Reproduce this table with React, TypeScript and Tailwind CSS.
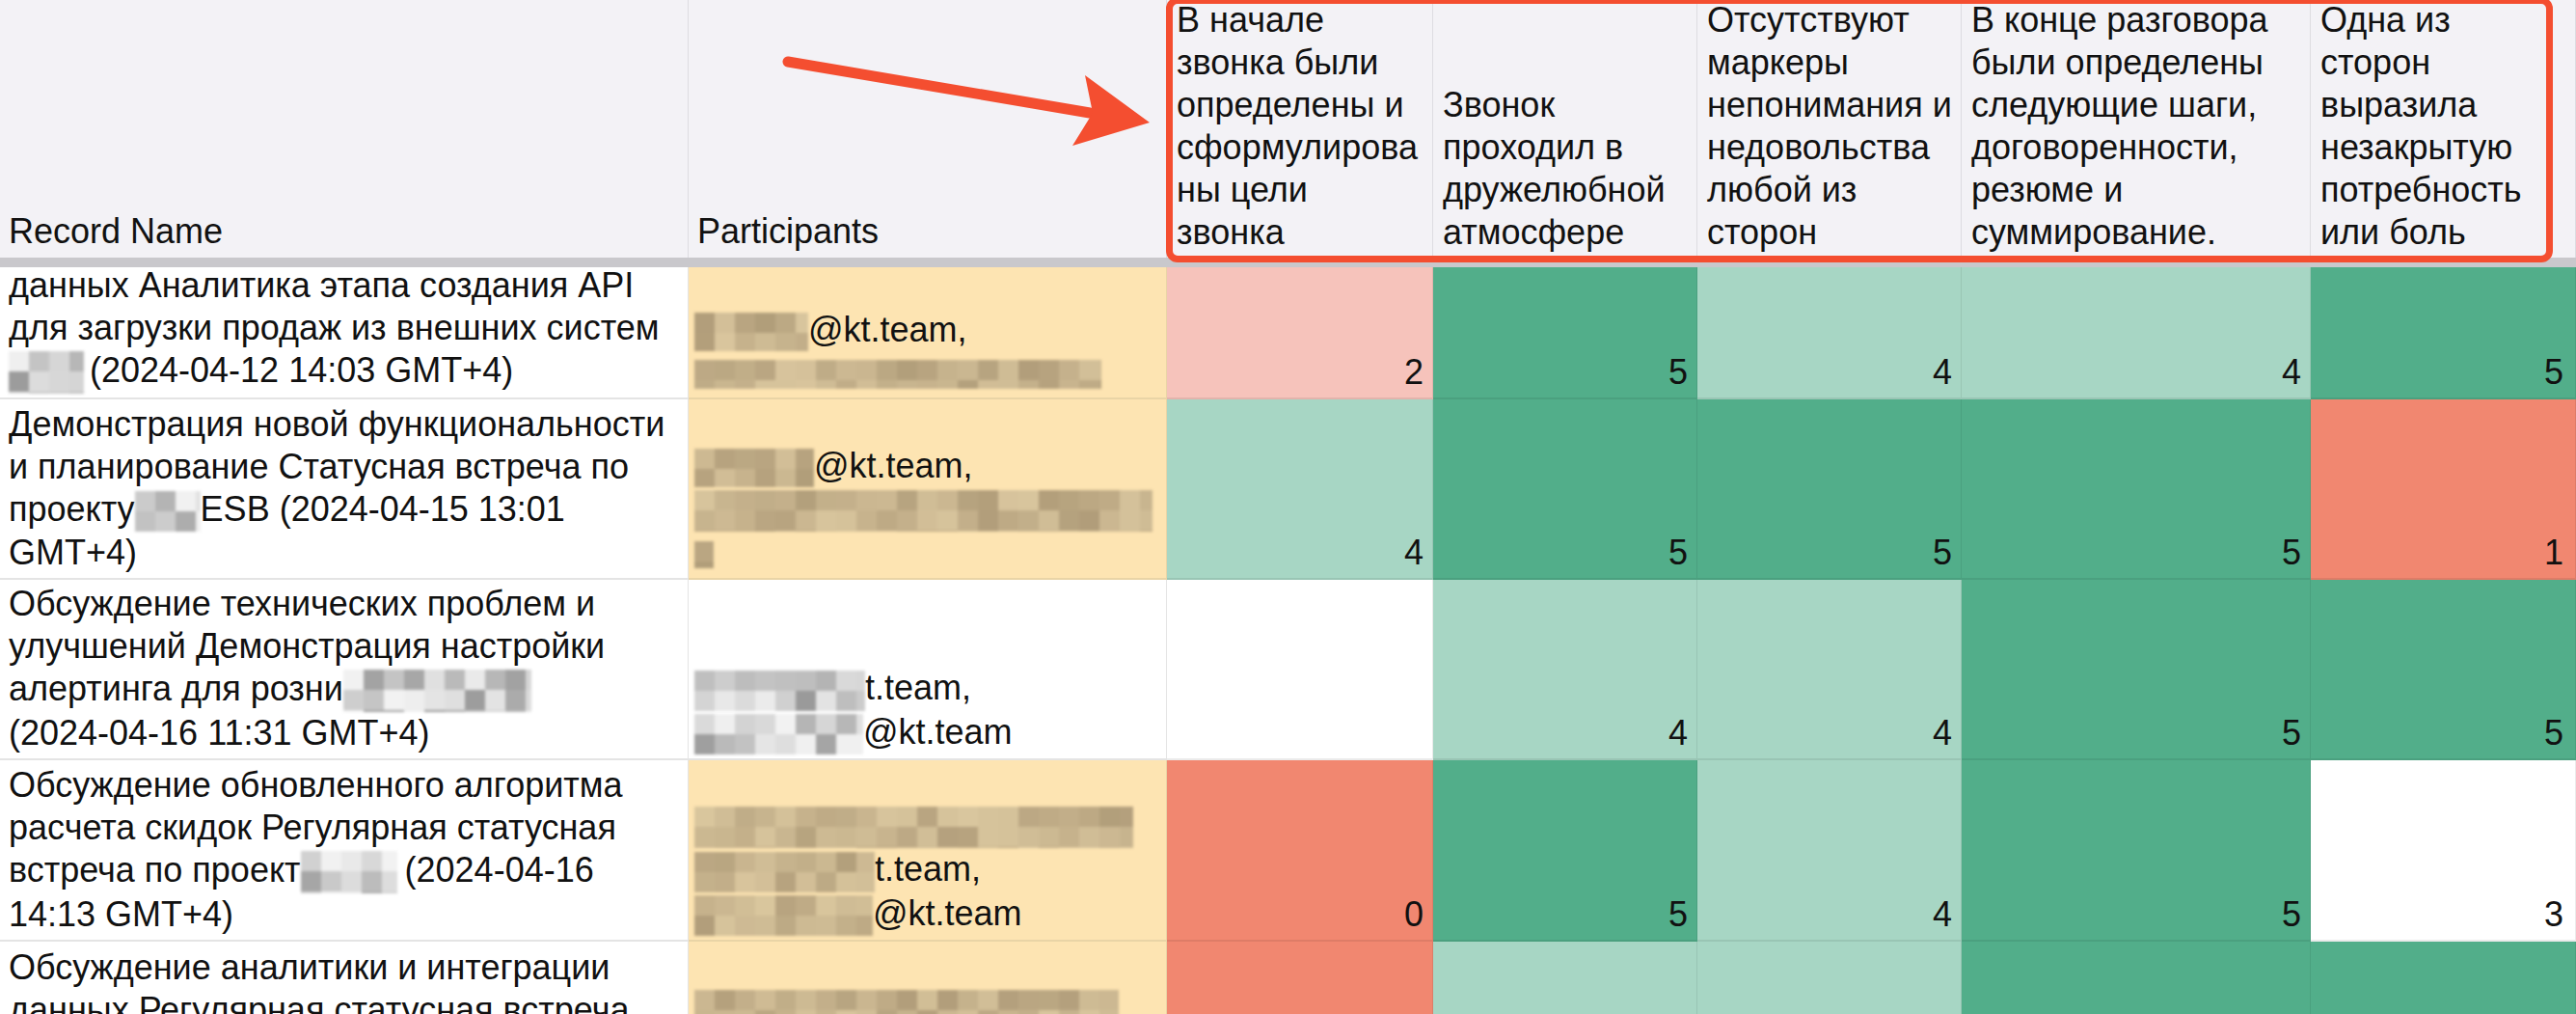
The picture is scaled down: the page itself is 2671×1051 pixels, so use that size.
import React from "react";

type Tone = "tan" | "gray";

// pixelated "redacted" block, like the blurred e-mails in the sheet
function Blur({ w, h, tone, seed }: { w: number; h: number; tone: Tone; seed: number }) {
  const size = 21;
  const cols = Math.ceil(w / size);
  const rows = Math.ceil(h / size);
  let s = (seed * 7919 + 17) % 233280;
  const rnd = () => {
    s = (s * 9301 + 49297) % 233280;
    return s / 233280;
  };
  const light = tone === "tan" ? [240, 221, 178] : [242, 242, 242];
  const dark = tone === "tan" ? [150, 130, 98] : [118, 118, 118];
  const cells = [];
  for (let r = 0; r < rows; r++) {
    for (let c = 0; c < cols; c++) {
      const t = tone === "tan" ? 0.25 + rnd() * 0.45 : Math.pow(rnd(), 1.5) * 0.75;
      const col = light.map((l, i) => Math.round(l + (dark[i] - l) * t));
      cells.push(
        <rect key={r + "-" + c} x={c * size} y={r * size} width={size} height={size} fill={`rgb(${col.join(",")})`} />
      );
    }
  }
  return (
    <svg
      width={w}
      height={h}
      viewBox={`0 0 ${w} ${h}`}
      className="inline-block align-middle blur-[1.5px]"
      shapeRendering="crispEdges"
    >
      {cells}
    </svg>
  );
}

const BG: Record<string, string> = {
  dg: "bg-[#52ae8a]",
  lg: "bg-[#a7d6c4]",
  lr: "bg-[#f6c3bb]",
  sa: "bg-[#f18770]",
  w: "bg-white",
};

const SCORE_W = ["w-[276px]", "w-[274px]", "w-[274px]", "w-[362px]", "w-[275px]"];

const HEADERS = [
  ["В начале", "звонка были", "определены и", "сформулирова", "ны цели", "звонка"],
  ["Звонок", "проходил в", "дружелюбной", "атмосфере"],
  ["Отсутствуют", "маркеры", "непонимания и", "недовольства", "любой из", "сторон"],
  ["В конце разговора", "были определены", "следующие шаги,", "договоренности,", "резюме и", "суммирование."],
  ["Одна из", "сторон", "выразила", "незакрытую", "потребность", "или боль"],
];

type Row = {
  h: string;
  name: React.ReactNode[];
  people: React.ReactNode[];
  yellow: boolean;
  scores: [string, string][];
};

const ROWS: Row[] = [
  {
    h: "h-[137px]",
    name: [
      "данных Аналитика этапа создания API",
      "для загрузки продаж из внешних систем",
      <>
        <Blur w={78} h={44} tone="gray" seed={3} />
        <span className="ml-[6px]">(2024-04-12 14:03 GMT+4)</span>
      </>,
    ],
    people: [
      <>
        <Blur w={118} h={40} tone="tan" seed={11} />
        @kt.team,
      </>,
      <Blur w={422} h={30} tone="tan" seed={12} />,
    ],
    yellow: true,
    scores: [["2", "lr"], ["5", "dg"], ["4", "lg"], ["4", "lg"], ["5", "dg"]],
  },
  {
    h: "h-[187px]",
    name: [
      "Демонстрация новой функциональности",
      "и планирование Статусная встреча по",
      <>
        проекту
        <Blur w={68} h={42} tone="gray" seed={5} />
        ESB (2024-04-15 13:01
      </>,
      "GMT+4)",
    ],
    people: [
      <>
        <Blur w={124} h={40} tone="tan" seed={21} />
        @kt.team,
      </>,
      <Blur w={475} h={43} tone="tan" seed={22} />,
      <Blur w={20} h={28} tone="tan" seed={23} />,
    ],
    yellow: true,
    scores: [["4", "lg"], ["5", "dg"], ["5", "dg"], ["5", "dg"], ["1", "sa"]],
  },
  {
    h: "h-[187px]",
    name: [
      "Обсуждение технических проблем и",
      "улучшений Демонстрация настройки",
      <>
        алертинга для розни
        <Blur w={195} h={44} tone="gray" seed={7} />
      </>,
      "(2024-04-16 11:31 GMT+4)",
    ],
    people: [
      <>
        <Blur w={177} h={42} tone="gray" seed={31} />
        t.team,
      </>,
      <>
        <Blur w={175} h={42} tone="gray" seed={32} />
        @kt.team
      </>,
    ],
    yellow: false,
    scores: [["", "w"], ["4", "lg"], ["4", "lg"], ["5", "dg"], ["5", "dg"]],
  },
  {
    h: "h-[188px]",
    name: [
      "Обсуждение обновленного алгоритма",
      "расчета скидок Регулярная статусная",
      <>
        встреча по проект
        <Blur w={100} h={44} tone="gray" seed={9} />
        <span className="ml-[8px]">(2024-04-16</span>
      </>,
      "14:13 GMT+4)",
    ],
    people: [
      <Blur w={455} h={43} tone="tan" seed={41} />,
      <>
        <Blur w={187} h={42} tone="tan" seed={42} />
        t.team,
      </>,
      <>
        <Blur w={185} h={42} tone="tan" seed={43} />
        @kt.team
      </>,
    ],
    yellow: true,
    scores: [["0", "sa"], ["5", "dg"], ["4", "lg"], ["5", "dg"], ["3", "w"]],
  },
  {
    h: "h-[187px]",
    name: [
      "Обсуждение аналитики и интеграции",
      "данных Регулярная статусная встреча",
      "по проекту ESB (2024-04-17 10:02",
      "GMT+4)",
    ],
    people: [
      <Blur w={440} h={40} tone="tan" seed={51} />,
      <>
        <Blur w={180} h={42} tone="tan" seed={52} />
        @kt.team,
      </>,
      <>
        <Blur w={180} h={42} tone="tan" seed={53} />
        @kt.team
      </>,
    ],
    yellow: true,
    scores: [["0", "sa"], ["4", "lg"], ["4", "lg"], ["5", "dg"], ["5", "dg"]],
  },
];

function Lines({ lines }: { lines: React.ReactNode[] }) {
  return (
    <>
      {lines.map((l, i) => (
        <div key={i} className="whitespace-nowrap">
          {l}
        </div>
      ))}
    </>
  );
}

export default function App() {
  return (
    <div className="relative w-[2671px] h-[1051px] overflow-hidden bg-white font-['Liberation_Sans',Arial,sans-serif] text-[36px] leading-[44px] text-[#111]">
      {/* header */}
      <div className="flex h-[267px] bg-[#f3f2f6]">
        <div className="w-[714px] shrink-0 flex flex-col justify-end px-[9px] pb-[5px] border-r border-[#dddce1]">
          Record Name
        </div>
        <div className="w-[496px] shrink-0 flex flex-col justify-end px-[9px] pb-[5px] border-r border-[#dddce1]">
          Participants
        </div>
        {HEADERS.map((lines, i) => (
          <div
            key={i}
            className={`${SCORE_W[i]} shrink-0 overflow-hidden flex flex-col justify-end pl-[10px] pb-[4px] border-r border-[#dddce1]`}
          >
            <Lines lines={lines} />
          </div>
        ))}
      </div>
      <div className="h-[10px] bg-[#c9c8cc]" />

      {ROWS.map((row, ri) => (
        <div key={ri} className={`flex ${row.h}`}>
          <div className="w-[714px] shrink-0 overflow-hidden flex flex-col justify-end px-[9px] pb-[4px] border-r border-b-2 border-[#e4e4e4] bg-white">
            <Lines lines={row.name} />
          </div>
          <div
            className={`w-[496px] shrink-0 overflow-hidden flex flex-col justify-end pl-[6px] pb-[4px] border-r border-b-2 ${
              row.yellow ? "bg-[#fde4b2] border-[#e9d4a6]" : "bg-white border-[#e4e4e4]"
            }`}
          >
            <Lines lines={row.people} />
          </div>
          {row.scores.map(([v, c], si) => (
            <div
              key={si}
              className={`${SCORE_W[si]} shrink-0 flex items-end justify-end ${
                si === 4 ? "pr-[12px]" : "pr-[9px]"
              } pb-[4px] border-r border-b-2 border-[#00000014] ${BG[c]}`}
            >
              {v}
            </div>
          ))}
        </div>
      ))}

      {/* annotation arrow */}
      <svg className="absolute left-[800px] top-[50px]" width="400" height="120" viewBox="0 0 400 120">
        <line x1="17" y1="14" x2="330" y2="67" stroke="#f44e30" strokeWidth="11" strokeLinecap="round" />
        <polygon points="325,28 392,77 312,101 333,67" fill="#f44e30" />
      </svg>

      {/* highlight box */}
      <div className="absolute left-[1209px] top-[-3px] w-[1438px] h-[275px] border-[7px] border-[#f44e30] rounded-[12px]" />
    </div>
  );
}
